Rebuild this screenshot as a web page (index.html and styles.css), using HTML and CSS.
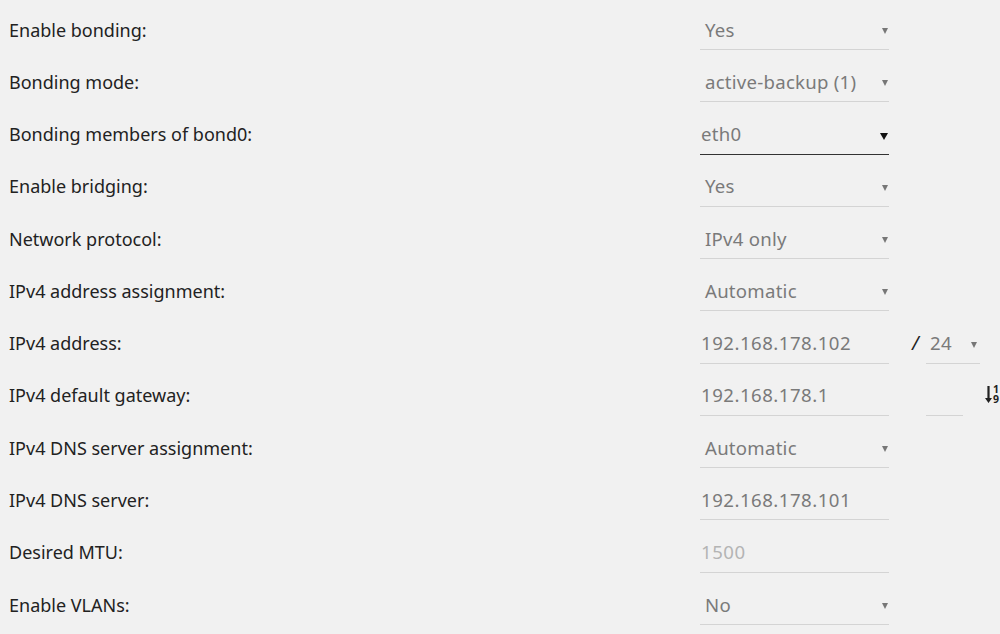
FILE: index.html
```html
<!DOCTYPE html>
<html>

<head>
	<title>Network settings</title>
	<link rel="stylesheet" href="styles.css">
</head>

<body>
	<div class="settings">
		<div class="row">
			<label class="label">Enable bonding:</label>
			<div class="field select"><span class="value">Yes</span><span class="caret"></span></div>
		</div>
		<div class="row">
			<label class="label">Bonding mode:</label>
			<div class="field select"><span class="value">active-backup (1)</span><span class="caret"></span></div>
		</div>
		<div class="row">
			<label class="label">Bonding members of bond0:</label>
			<div class="field select multi"><span class="value">eth0</span><span class="caret"></span></div>
		</div>
		<div class="row">
			<label class="label">Enable bridging:</label>
			<div class="field select"><span class="value">Yes</span><span class="caret"></span></div>
		</div>
		<div class="row">
			<label class="label">Network protocol:</label>
			<div class="field select"><span class="value">IPv4 only</span><span class="caret"></span></div>
		</div>
		<div class="row">
			<label class="label">IPv4 address assignment:</label>
			<div class="field select"><span class="value">Automatic</span><span class="caret"></span></div>
		</div>
		<div class="row">
			<label class="label">IPv4 address:</label>
			<div class="field input"><span class="value">192.168.178.102</span></div>
			<span class="slash">/</span>
			<div class="field select small"><span class="value">24</span><span class="caret"></span></div>
		</div>
		<div class="row">
			<label class="label">IPv4 default gateway:</label>
			<div class="field input"><span class="value">192.168.178.1</span></div>
			<span class="slash"></span>
			<div class="field input metric"><span class="value">&nbsp;</span></div>
			<span class="sort-icon">
				<svg width="7" height="17" viewBox="0 0 7 17">
					<path d="M2.4 0h2.2v12h2.4l-3.5 5-3.5-5h2.4z" fill="#222" />
				</svg>
				<span class="digits"><span>1</span><span>9</span></span>
			</span>
		</div>
		<div class="row">
			<label class="label">IPv4 DNS server assignment:</label>
			<div class="field select"><span class="value">Automatic</span><span class="caret"></span></div>
		</div>
		<div class="row">
			<label class="label">IPv4 DNS server:</label>
			<div class="field input"><span class="value">192.168.178.101</span></div>
		</div>
		<div class="row">
			<label class="label">Desired MTU:</label>
			<div class="field input"><span class="value placeholder">1500</span></div>
		</div>
		<div class="row">
			<label class="label">Enable VLANs:</label>
			<div class="field select"><span class="value">No</span><span class="caret"></span></div>
		</div>
	</div>
</body>

</html>
```
FILE: styles.css
```css
body {
	margin: 0;
	padding: 0;
	background-color: #f1f1f1;
	font-family: "Noto Sans", "Open Sans", sans-serif;
	overflow: hidden;
	height: 634px;
}

.settings {
	display: flex;
	flex-direction: column;
	padding-left: 9px;
}

.row {
	display: flex;
	align-items: baseline;
	height: 52.27px;
	padding-top: 16.6px;
	box-sizing: border-box;
}

.label {
	width: 691px;
	flex-shrink: 0;
	font-size: 18px;
	color: #222;
	line-height: 24px;
}

.field {
	position: relative;
	display: flex;
	width: 189px;
	padding-bottom: 6.4px;
	border-bottom: 1px solid #d4d4d4;
	flex-shrink: 0;
}

.value {
	font-size: 18.6px;
	line-height: 26px;
	letter-spacing: 0.25px;
	color: #7a7a7a;
	padding-left: 1px;
	white-space: pre;
}

.input .value {
	letter-spacing: 0.5px;
}

.select .value {
	padding-left: 5px;
}

.multi {
	border-bottom-color: #333;
}

.multi .value {
	padding-left: 1px;
}

.placeholder {
	color: #b4b4b4;
}

.caret {
	position: absolute;
	right: 1px;
	bottom: 15px;
	width: 0;
	height: 0;
	border-style: solid;
	border-width: 6px 3.5px 0 3.5px;
	border-color: #777 transparent transparent transparent;
}

.multi .caret {
	bottom: 14px;
	border-width: 7px 4px 0 4px;
	border-top-color: #111;
}

.slash {
	width: 37px;
	flex-shrink: 0;
	font-size: 19px;
	color: #222;
	padding-left: 23px;
	box-sizing: border-box;
	font-style: italic;
}

.small {
	width: 54px;
}

.small .value {
	padding-left: 4px;
}

.small .caret {
	right: 3px;
}

.metric {
	width: 37px;
}

.sort-icon {
	display: flex;
	align-items: flex-start;
	gap: 1px;
	margin-left: 22px;
	align-self: flex-start;
	margin-top: 4px;
}

.digits {
	display: flex;
	flex-direction: column;
	margin-top: -2px;
	font-size: 10.5px;
	line-height: 10px;
	font-weight: bold;
	color: #222;
}
```
